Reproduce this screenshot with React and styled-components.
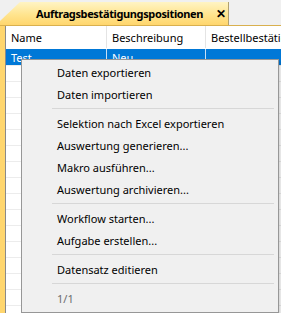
import React from 'react';
import styled, { createGlobalStyle } from 'styled-components';

const GlobalStyle = createGlobalStyle`
  html, body {
    margin: 0;
    padding: 0;
    background: #f0f0f0;
    overflow: hidden;
  }
  body {
    font-family: "Noto Sans", "Open Sans", sans-serif;
    font-size: 11px;
    color: #000;
  }
`;

const columns = [
  { title: 'Name', width: 101 },
  { title: 'Beschreibung', width: 99 },
  { title: 'Bestellbestätigung', width: 120 },
];

const menuGroups = [
  ['Daten exportieren', 'Daten importieren'],
  ['Selektion nach Excel exportieren', 'Auswertung generieren...', 'Makro ausführen...', 'Auswertung archivieren...'],
  ['Workflow starten...', 'Aufgabe erstellen...'],
  ['Datensatz editieren'],
];

const Screen = styled.div`
  position: relative;
  width: 281px;
  height: 313px;
  overflow: hidden;
  background: #f0f0f0;
`;

const TabStrip = styled.div`
  display: flex;
  align-items: flex-end;
  height: 25px;
  background: #f0f0f0;
  border-bottom: 1px solid #d9b04e;
`;

const Tab = styled.div`
  display: flex;
  align-items: center;
  gap: 13px;
  width: 229px;
  height: 23px;
  box-sizing: border-box;
  padding-left: 36px;
  background: linear-gradient(180deg, #fff4c4 0%, #ffe48e 55%, #ffd66e 100%);
  clip-path: polygon(20px 0, 100% 0, 100% 100%, 0 100%, 0 19px);
  border-right: 1px solid #b0a070;
  font-weight: 700;
  font-size: 11px;
  letter-spacing: -0.37px;
`;

const Close = styled.span`
  font-weight: 700;
  font-size: 12px;
  line-height: 1;
`;

const Frame = styled.div`
  height: 288px;
  background: #ffd66e;
  padding: 0 0 0 5px;
`;

const Grid = styled.div`
  height: 100%;
  background: #fff;
  border-left: 1px solid #8a8a8a;
  overflow: hidden;
`;

const Row = styled.div`
  display: flex;
  height: ${(p) => p.$h}px;
  background: ${(p) => (p.$selected ? '#0078d7' : '#fff')};
  color: ${(p) => (p.$selected ? '#fff' : '#000')};
  border-bottom: 1px solid ${(p) => (p.$header ? '#fff' : '#ececec')};
`;

const Cell = styled.div`
  flex: 0 0 ${(p) => p.$w}px;
  display: flex;
  align-items: center;
  padding-left: 5px;
  box-sizing: border-box;
  border-right: 1px solid ${(p) => (p.$selected ? '#c8dff5' : '#e4e4e4')};
  white-space: nowrap;
  overflow: hidden;
`;

const Menu = styled.div`
  position: absolute;
  left: 21px;
  top: 59px;
  width: 258px;
  height: 254px;
  box-sizing: border-box;
  background: #f0f0f0;
  border: 1px solid #979797;
  padding: 1px 2px 0 2px;
  box-shadow: 2px 2px 2px rgba(0, 0, 0, 0.15);
`;

const Item = styled.div`
  height: 22px;
  display: flex;
  align-items: center;
  padding-left: 33px;
  color: ${(p) => (p.$disabled ? '#6d6d6d' : '#000')};
  white-space: nowrap;
`;

const Separator = styled.div`
  height: 1px;
  margin: 3px 2px 3px 28px;
  background: #d7d7d7;
`;

export default function App() {
  const rows = Array.from({ length: 16 });
  return (
    <>
      <GlobalStyle />
      <Screen>
        <TabStrip>
          <Tab>
            <span>Auftragsbestätigungspositionen</span>
            <Close>✕</Close>
          </Tab>
        </TabStrip>
        <Frame>
          <Grid>
            <Row $h={22} $header>
              {columns.map((c) => (
                <Cell key={c.title} $w={c.width}>{c.title}</Cell>
              ))}
            </Row>
            <Row $h={16} $selected>
              <Cell $w={101} $selected>Test</Cell>
              <Cell $w={99} $selected>Neu</Cell>
              <Cell $w={120} $selected />
            </Row>
            {rows.map((_, i) => (
              <Row key={i} $h={15}>
                <Cell $w={101} />
                <Cell $w={99} />
                <Cell $w={120} />
              </Row>
            ))}
          </Grid>
        </Frame>
        <Menu>
          {menuGroups.map((group, gi) => (
            <React.Fragment key={gi}>
              {group.map((label) => (
                <Item key={label}>{label}</Item>
              ))}
              <Separator />
            </React.Fragment>
          ))}
          <Item $disabled>1/1</Item>
        </Menu>
      </Screen>
    </>
  );
}
